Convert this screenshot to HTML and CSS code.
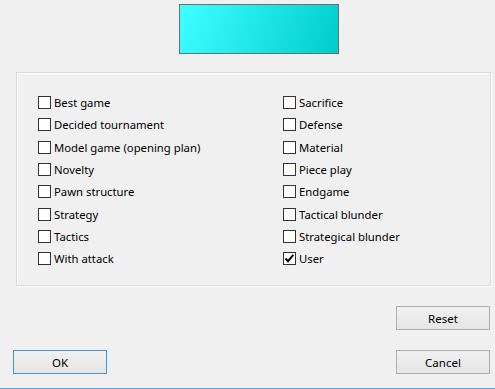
FILE: index.html
```html
<!DOCTYPE html>
<html lang="en">
<head>
  <meta charset="UTF-8">
  <title>Game Tags</title>
  <link rel="stylesheet" href="styles.css">
</head>
<body>
  <div class="dialog">
    <div class="swatch"></div>

    <div class="group">
      <div class="tag-grid">
        <label class="tag"><span class="box"></span>Best game</label>
        <label class="tag"><span class="box"></span>Sacrifice</label>
        <label class="tag"><span class="box"></span>Decided tournament</label>
        <label class="tag"><span class="box"></span>Defense</label>
        <label class="tag"><span class="box"></span>Model game (opening plan)</label>
        <label class="tag"><span class="box"></span>Material</label>
        <label class="tag"><span class="box"></span>Novelty</label>
        <label class="tag"><span class="box"></span>Piece play</label>
        <label class="tag"><span class="box"></span>Pawn structure</label>
        <label class="tag"><span class="box"></span>Endgame</label>
        <label class="tag"><span class="box"></span>Strategy</label>
        <label class="tag"><span class="box"></span>Tactical blunder</label>
        <label class="tag"><span class="box"></span>Tactics</label>
        <label class="tag"><span class="box"></span>Strategical blunder</label>
        <label class="tag"><span class="box"></span>With attack</label>
        <label class="tag"><span class="box checked"><svg width="11" height="11" viewBox="0 0 11 11"><path d="M1.5 5.5 L4 8.2 L9.3 1.8" fill="none" stroke="#000" stroke-width="1.9"/></svg></span>User</label>
      </div>
    </div>

    <div class="reset-row">
      <button class="btn">Reset</button>
    </div>

    <div class="action-row">
      <button class="btn default">OK</button>
      <button class="btn">Cancel</button>
    </div>
  </div>
</body>
</html>
```

FILE: styles.css
```css
body {
  margin: 0;
  background-color: #f0f0f0;
  font-family: "Noto Sans", "DejaVu Sans", sans-serif;
  font-size: 11.3px;
  color: #000;
}

.dialog {
  width: 495px;
  height: 388px;
  border-bottom: 1px solid #5f9fe6;
  display: flex;
  flex-direction: column;
  overflow: hidden;
}

.swatch {
  box-sizing: border-box;
  width: 160px;
  height: 50px;
  margin: 4px 0 0 179px;
  border: 1px solid #6e6e6e;
  background: linear-gradient(110deg, #3fffff 0%, #00cccc 100%);
}

.group {
  box-sizing: border-box;
  width: 475px;
  height: 214px;
  margin: 18px 0 0 16px;
  padding: 23px 0 0 21px;
  border: 1px solid #d9d9d9;
  box-shadow: inset 1px 1px 0 #fff, 1px 1px 0 #fff;
}

.tag-grid {
  display: grid;
  grid-template-columns: 245px 1fr;
  grid-auto-rows: 22.33px;
}

.tag {
  display: flex;
  align-items: flex-start;
  gap: 3px;
  line-height: 13px;
  white-space: nowrap;
}

.box {
  box-sizing: border-box;
  width: 13px;
  height: 13px;
  border: 1px solid #333;
  background-color: #fff;
  display: flex;
  align-items: center;
  justify-content: center;
  flex-shrink: 0;
}

.reset-row {
  margin: 20px 0 0 396px;
}

.action-row {
  display: flex;
  justify-content: space-between;
  margin: 20px 5px 0 13px;
}

.btn {
  box-sizing: border-box;
  width: 94px;
  height: 24px;
  padding: 0;
  border: 1px solid #adadad;
  background: linear-gradient(#f0f0f0, #e5e5e5);
  font-family: inherit;
  font-size: 11.5px;
  color: #000;
}

.btn.default {
  border-color: #3c97e6;
}
```
